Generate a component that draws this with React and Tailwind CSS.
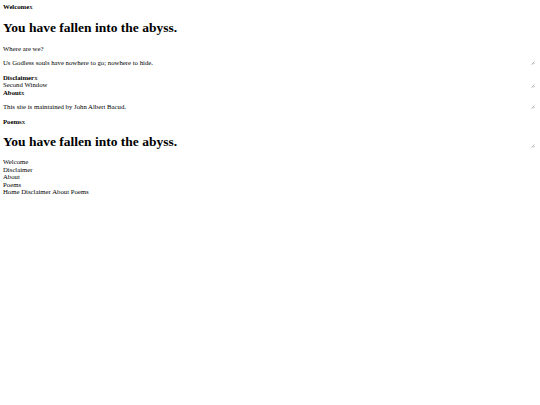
import React from "react";

function Grip() {
  return (
    <svg
      className="absolute right-[2px] bottom-[1px]"
      width="4"
      height="4"
      viewBox="0 0 4 4"
    >
      <line x1="3.5" y1="0.5" x2="0.5" y2="3.5" stroke="#a8a8a8" strokeWidth="0.8" />
      <line x1="3.5" y1="2" x2="2" y2="3.5" stroke="#a8a8a8" strokeWidth="0.8" />
    </svg>
  );
}

function Header({ title }) {
  return (
    <div className="font-bold">
      {title}
      <span className="font-normal">x</span>
    </div>
  );
}

export default function App() {
  return (
    <div
      className="min-h-[405px] bg-white p-[3px] text-[6.75px] leading-[7.5px] text-black"
      style={{ fontFamily: '"Liberation Serif", "Times New Roman", serif' }}
    >
      <div className="mb-[7.5px]">
        <Header title="Welcome" />
        <div className="relative">
          <h1 className="mt-[9px] text-[13.5px] font-bold leading-[15px]">
            You have fallen into the abyss.
          </h1>
          <p className="mt-[10px]">Where are we?</p>
          <p className="mt-[6.5px]">
            Us Godless souls have nowhere to go; nowhere to hide.
          </p>
          <Grip />
        </div>
      </div>

      <div>
        <Header title="Disclaimer" />
        <div className="relative">
          <div>Second Window</div>
          <Grip />
        </div>
      </div>

      <div className="mb-[7.5px]">
        <Header title="About" />
        <div className="relative">
          <p className="mt-[6.5px]">This site is maintained by John Albert Bacud.</p>
          <Grip />
        </div>
      </div>

      <div className="mb-[9px]">
        <Header title="Poems" />
        <div className="relative">
          <h1 className="mt-[9px] text-[13.5px] font-bold leading-[15px]">
            You have fallen into the abyss.
          </h1>
          <Grip />
        </div>
      </div>

      <ul>
        <li>Welcome</li>
        <li>Disclaimer</li>
        <li>About</li>
        <li>Poems</li>
      </ul>
      <div>
        <span>Home</span> <span>Disclaimer</span> <span>About</span>{" "}
        <span>Poems</span>
      </div>
    </div>
  );
}
